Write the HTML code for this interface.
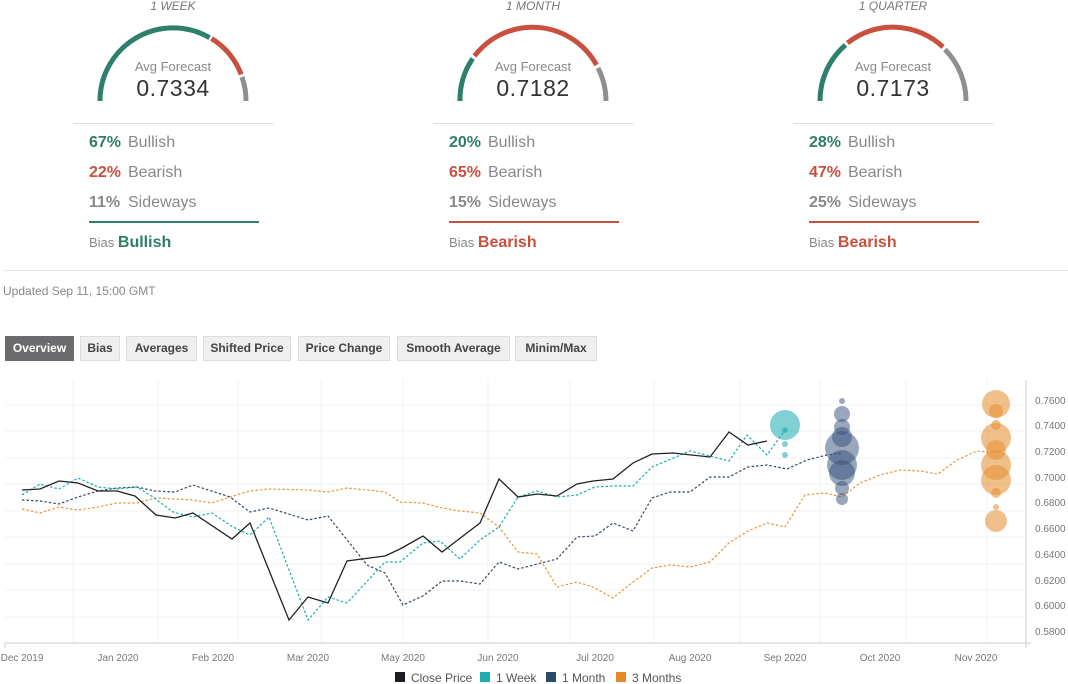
<!DOCTYPE html>
<html><head><meta charset="utf-8"><style>
*{margin:0;padding:0;box-sizing:border-box}
body{width:1068px;height:684px;overflow:hidden;background:#fff;font-family:"Liberation Sans",sans-serif;position:relative;color:#333}
.card{position:absolute;top:0;width:200px}
.ttl{position:absolute;top:0;width:200px;text-align:center;font-size:12px;font-style:italic;color:#777;line-height:13px}
.gauge{position:absolute;top:0;left:0}
.avg{position:absolute;top:59px;width:200px;text-align:center;font-size:13px;color:#888}
.val{position:absolute;top:75px;width:200px;text-align:center;font-size:23px;color:#333;letter-spacing:0.5px}
.div{position:absolute;top:123px;left:0;width:200px;height:1px;background:#ddd}
.row{position:absolute;left:16px;font-size:16px;color:#888;line-height:18px}
.row b{display:inline-block;width:39px;font-weight:bold}
.ul{position:absolute;top:221px;left:16px;width:170px;height:2px}
.bias{position:absolute;top:234px;left:16px;font-size:13px;color:#888}
.bias b{font-size:16px}
.g{color:#2f7d69}.r{color:#c9503f}.s{color:#888}
.tab{position:absolute;top:336px;height:25px;line-height:23px;text-align:center;font-size:12px;font-weight:bold;color:#444;background:#efefef;border:1px solid #ddd;white-space:nowrap}
.tab.on{background:#6b6b6d;color:#fff;border-color:#6b6b6d}
</style></head><body>

<div class="card" style="left:73px">
<div class="ttl">1 WEEK</div>
<svg class="gauge" width="200" height="110"><g fill="none" stroke-width="5">
<path d="M27 101 A73 73 0 0 1 136.6 37.7" stroke="#2e7f6b"/>
<path d="M138.5 38.5 A73 73 0 0 1 168.2 74.5" stroke="#c9503f"/>
<path d="M169 77 A73 73 0 0 1 173 101" stroke="#8f8f8f"/></g></svg>
<div class="avg">Avg Forecast</div><div class="val">0.7334</div>
<div class="div"></div>
<div class="row" style="top:134px"><b class="g">67%</b>Bullish</div>
<div class="row" style="top:164px"><b class="r">22%</b>Bearish</div>
<div class="row" style="top:194px"><b class="s">11%</b>Sideways</div>
<div class="ul" style="background:#2e7f6b"></div>
<div class="bias">Bias <b class="g">Bullish</b></div>
</div>

<div class="card" style="left:433px">
<div class="ttl">1 MONTH</div>
<svg class="gauge" width="200" height="110"><g fill="none" stroke-width="5">
<path d="M27 101 A73 73 0 0 1 39.7 58.5" stroke="#2e7f6b"/>
<path d="M41.5 56 A73 73 0 0 1 163.5 65" stroke="#c9503f"/>
<path d="M165 68 A73 73 0 0 1 173 101" stroke="#8f8f8f"/></g></svg>
<div class="avg">Avg Forecast</div><div class="val">0.7182</div>
<div class="div"></div>
<div class="row" style="top:134px"><b class="g">20%</b>Bullish</div>
<div class="row" style="top:164px"><b class="r">65%</b>Bearish</div>
<div class="row" style="top:194px"><b class="s">15%</b>Sideways</div>
<div class="ul" style="background:#c9503f"></div>
<div class="bias">Bias <b class="r">Bearish</b></div>
</div>

<div class="card" style="left:793px">
<div class="ttl">1 QUARTER</div>
<svg class="gauge" width="200" height="110"><g fill="none" stroke-width="5">
<path d="M27 101 A73 73 0 0 1 52.5 45" stroke="#2e7f6b"/>
<path d="M54.5 43 A73 73 0 0 1 150 47" stroke="#c9503f"/>
<path d="M152 49.5 A73 73 0 0 1 173 101" stroke="#8f8f8f"/></g></svg>
<div class="avg">Avg Forecast</div><div class="val">0.7173</div>
<div class="div"></div>
<div class="row" style="top:134px"><b class="g">28%</b>Bullish</div>
<div class="row" style="top:164px"><b class="r">47%</b>Bearish</div>
<div class="row" style="top:194px"><b class="s">25%</b>Sideways</div>
<div class="ul" style="background:#c9503f"></div>
<div class="bias">Bias <b class="r">Bearish</b></div>
</div>

<div style="position:absolute;top:270px;left:3px;width:1065px;height:1px;background:#e5e5e5"></div>
<div style="position:absolute;top:284px;left:3px;font-size:12px;color:#888">Updated Sep 11, 15:00 GMT</div>

<div class="tab on" style="left:5px;width:69px">Overview</div>
<div class="tab" style="left:80px;width:40px">Bias</div>
<div class="tab" style="left:126px;width:71px">Averages</div>
<div class="tab" style="left:203px;width:88px">Shifted Price</div>
<div class="tab" style="left:298px;width:92px">Price Change</div>
<div class="tab" style="left:397px;width:113px">Smooth Average</div>
<div class="tab" style="left:515px;width:82px">Minim/Max</div>

<svg style="position:absolute;left:0;top:0" width="1068" height="684" font-family="Liberation Sans, sans-serif">
<g stroke="#f0f0f0" stroke-width="1">
<path d="M5 405H1026M5 431H1026M5 458H1026M5 484H1026M5 511H1026M5 537H1026M5 564H1026M5 590H1026M5 617H1026"/>
<path d="M73 380V643M158 380V643M238 380V643M321 380V643M403 380V643M488 380V643M570 380V643M654 380V643M740 380V643M820 380V643M906 380V643M987 380V643"/>
</g>
<path d="M5 643H1031M1026 380V648M5 643V648" stroke="#ccc" fill="none"/>
<g font-size="10" fill="#777" text-anchor="start">
<text x="1035" y="404">0.7600</text><text x="1035" y="429">0.7400</text><text x="1035" y="455">0.7200</text><text x="1035" y="481">0.7000</text><text x="1035" y="506">0.6800</text><text x="1035" y="532">0.6600</text><text x="1035" y="558">0.6400</text><text x="1035" y="584">0.6200</text><text x="1035" y="609">0.6000</text><text x="1035" y="635">0.5800</text>
</g>
<g font-size="10" fill="#777" text-anchor="middle">
<text x="22" y="661">Dec 2019</text><text x="118" y="661">Jan 2020</text><text x="213" y="661">Feb 2020</text><text x="308" y="661">Mar 2020</text><text x="403" y="661">May 2020</text><text x="498" y="661">Jun 2020</text><text x="595" y="661">Jul 2020</text><text x="690" y="661">Aug 2020</text><text x="785" y="661">Sep 2020</text><text x="880" y="661">Oct 2020</text><text x="976" y="661">Nov 2020</text>
</g>
<g fill="none" stroke-width="1.2" stroke-dasharray="2.5 2">
<polyline stroke="#e8953a" points="22,509 40,513 59,507 78,510 98,507 117,503 137,503 155,498 175,499 193,500 212,503 230,497 250,491 269,489 308,490 328,492 347,488 367,490 385,492 400,502 423,503 442,508 460,511 480,513 499,527 518,552 537,554 557,587 577,582 593,587 613,598 633,582 652,568 670,565 690,567 710,562 729,543 748,531 767,523 785,527 805,495 825,493 842,497 860,483 880,475 900,470 920,471 938,474 957,460 977,451 996,453"/>
<polyline stroke="#34495e" points="22,500 40,501 59,504 78,497 98,491 117,488 137,487 155,491 175,492 193,485 230,497 250,512 269,508 308,520 328,516 367,565 385,573 403,605 423,596 442,581 460,581 480,584 499,562 518,569 557,559 577,537 595,536 613,523 633,531 652,498 670,492 690,492 710,477 729,477 748,467 767,465 787,469 807,460 827,455 842,453"/>
<polyline stroke="#1aacb0" points="22,495 40,484 59,489 78,478 98,487 117,489 137,487 153,497 173,512 193,517 212,513 233,527 250,535 269,517 308,620 328,597 347,603 385,562 400,562 423,543 440,541 460,559 480,540 499,527 518,497 537,491 557,497 577,495 595,487 613,486 633,486 652,467 690,451 710,456 729,461 747,435 767,455 785,430"/>
</g>
<polyline fill="none" stroke="#222" stroke-width="1.3" points="22,490 40,489 59,481 78,483 98,491 117,491 135,496 156,515 175,518 193,513 232,539 250,523 289,620 308,597 328,603 347,561 385,556 400,549 423,536 442,552 480,523 499,479 518,497 537,494 557,496 577,484 593,481 613,479 633,463 652,454 673,453 710,457 729,432 748,445 767,441"/>
<g fill="#1aacb0" fill-opacity="0.55">
<circle cx="785" cy="425" r="15"/><circle cx="785" cy="430" r="3"/><circle cx="785" cy="444" r="3"/><circle cx="785" cy="455" r="3"/>
</g>
<g fill="#34507a" fill-opacity="0.5">
<circle cx="842" cy="401" r="3"/><circle cx="842" cy="414" r="8"/><circle cx="842" cy="427" r="8"/><circle cx="842" cy="437" r="10"/><circle cx="842" cy="448" r="17"/><circle cx="842" cy="465" r="15"/><circle cx="842" cy="473" r="13"/><circle cx="842" cy="488" r="7"/><circle cx="842" cy="499" r="6"/>
</g>
<g fill="#e8953a" fill-opacity="0.6">
<circle cx="996" cy="404" r="14"/><circle cx="996" cy="411" r="7"/><circle cx="996" cy="425" r="5"/><circle cx="996" cy="438" r="15"/><circle cx="996" cy="450" r="10"/><circle cx="996" cy="465" r="15"/><circle cx="996" cy="480" r="15"/><circle cx="996" cy="493" r="5"/><circle cx="996" cy="507" r="3"/><circle cx="996" cy="521" r="11"/>
</g>
<g font-size="12" fill="#555">
<rect x="395" y="672" width="10" height="10" fill="#1d1d24"/><text x="411" y="682">Close Price</text>
<rect x="480" y="672" width="10" height="10" fill="#1aacb0"/><text x="496" y="682">1 Week</text>
<rect x="546" y="672" width="10" height="10" fill="#2c4a6e"/><text x="562" y="682">1 Month</text>
<rect x="616" y="672" width="10" height="10" fill="#e8892a"/><text x="632" y="682">3 Months</text>
</g>
</svg>
</body></html>
